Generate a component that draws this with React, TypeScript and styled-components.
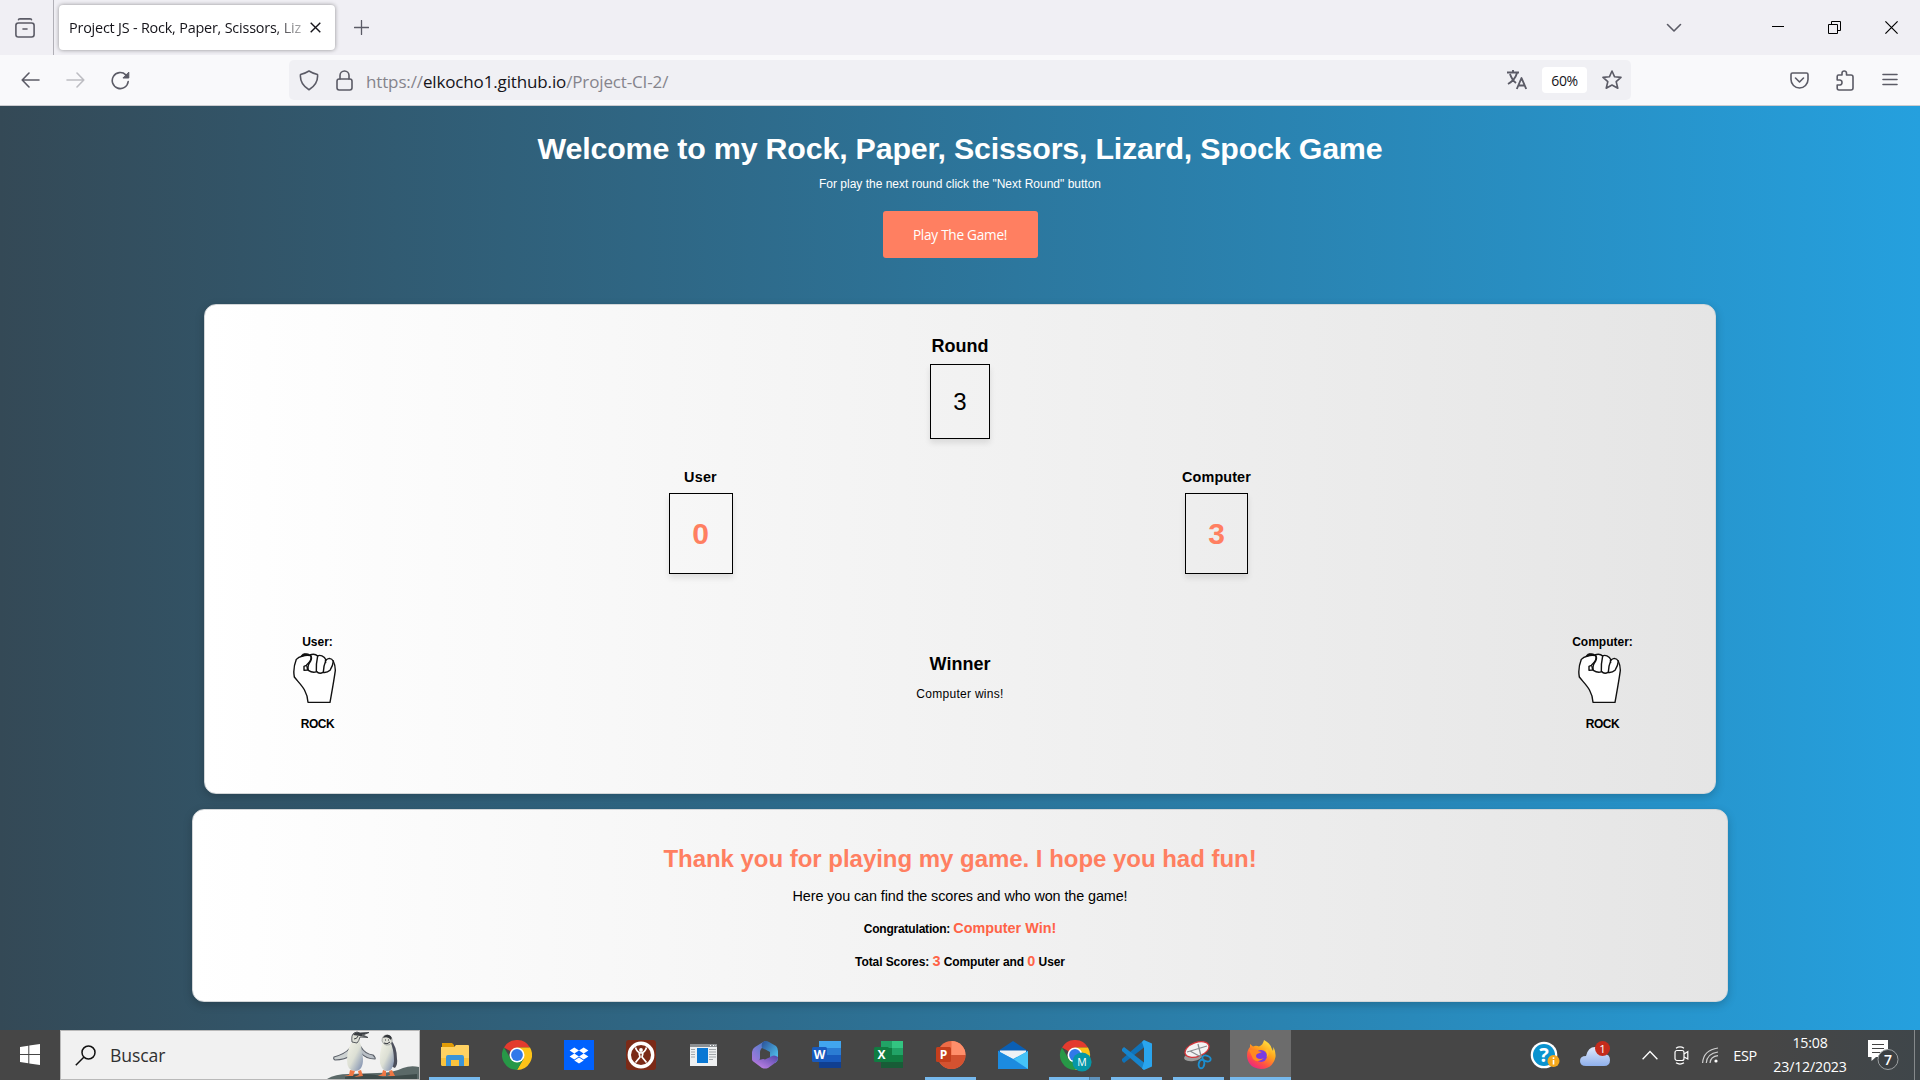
import React from "react";
import styled, { createGlobalStyle } from "styled-components";

const coral = "#ff7f61";
const tomato = "#ff6347";
const uiFont = `"Open Sans", "Noto Sans", sans-serif`;
const pageFont = `"Liberation Sans", Arial, sans-serif`;

const GlobalStyle = createGlobalStyle`
  * { box-sizing: border-box; }
  body { margin: 0; overflow: hidden; }
  h1, h2, h3, h4, p { margin: 0; }
`;

const Screen = styled.div`
  width: 1920px;
  height: 1080px;
  display: flex;
  flex-direction: column;
  font-family: ${uiFont};
`;

/* ---------- browser chrome ---------- */
const TabStrip = styled.div`
  height: 55px;
  display: flex;
  align-items: center;
  background: #f0eff4;
`;
const Slot = styled.div<{ $w: number; $mr?: number }>`
  width: ${(p) => p.$w}px;
  margin-right: ${(p) => p.$mr ?? 0}px;
  flex: none;
  display: flex;
  align-items: center;
  justify-content: center;
  svg { display: block; }
`;
const ViewSlot = styled(Slot)`
  height: 55px;
  border-right: 1px solid #b0afb6;
  padding-right: 3px;
`;
const Tab = styled.div`
  width: 276px;
  height: 45px;
  margin-left: 5px;
  padding: 0 14px 0 10px;
  display: flex;
  align-items: center;
  justify-content: space-between;
  background: #fff;
  border-radius: 4px;
  box-shadow: 0 0 4px rgba(0, 0, 0, 0.4);
`;
const TabTitle = styled.div`
  white-space: nowrap;
  padding-top: 1px;
  font-size: 14.4px;
  line-height: 22px;
  letter-spacing: -0.2px;
  color: #15141a;
  mask-image: linear-gradient(to right, #000 205px, transparent 246px);
`;
const Grow = styled.div`
  flex: 1;
`;
const Toolbar = styled.div`
  height: 51px;
  padding: 0 8px;
  display: flex;
  align-items: center;
  background: #f9f9fb;
  border-bottom: 1px solid #ccccd0;
`;
const UrlBar = styled.div`
  width: 1342px;
  height: 40px;
  margin-left: 146px;
  display: flex;
  align-items: center;
  background: #f0f0f4;
  border-radius: 5px;
`;
const Url = styled.div`
  margin-left: 6px;
  margin-top: 3px;
  flex: 1;
  font-size: 17px;
  line-height: 24px;
  letter-spacing: -0.14px;
  color: #85848c;
  b { font-weight: 400; color: #15141a; }
`;
const ZoomBadge = styled.div`
  width: 45px;
  height: 26px;
  margin-right: 6px;
  border-radius: 4px;
  background: #fff;
  color: #15141a;
  font-size: 14px;
  line-height: 28px;
  letter-spacing: -0.4px;
  text-align: center;
`;

/* ---------- game page ---------- */
const Page = styled.main`
  height: 924px;
  display: flex;
  flex-direction: column;
  align-items: center;
  overflow: hidden;
  font-family: ${pageFont};
  color: #000;
  background: linear-gradient(to right, #344956, #25a0de);
`;
const Title = styled.h1`
  margin-top: 22px;
  font-size: 30.4px;
  line-height: 40px;
  letter-spacing: -0.2px;
  color: #fff;
  white-space: nowrap;
`;
const Hint = styled.p`
  margin-top: 6px;
  font-size: 12px;
  line-height: 20px;
  color: #fff;
`;
const PlayButton = styled.button`
  width: 155px;
  height: 47px;
  margin-top: 17px;
  padding: 0;
  flex: none;
  border: 0;
  border-radius: 3px;
  background: ${coral};
  color: #fff;
  font: 13.6px/47px ${uiFont};
  letter-spacing: -0.25px;
`;
const Card = styled.section<{ $w: number; $h: number; $mt: number; $pt: number }>`
  width: ${(p) => p.$w}px;
  height: ${(p) => p.$h}px;
  margin-top: ${(p) => p.$mt}px;
  padding-top: ${(p) => p.$pt - 1}px;
  flex: none;
  display: flex;
  flex-direction: column;
  align-items: center;
  border: 1px solid #d3d6d8;
  border-radius: 12px;
  background: linear-gradient(to right, #fff, #e5e5e5) border-box;
  box-shadow: 0 3px 10px rgba(0, 0, 0, 0.2);
`;
const Line = styled.p<{ $size: number; $bold?: boolean; $mt?: number; $ls?: number; $color?: string }>`
  margin-top: ${(p) => p.$mt ?? 0}px;
  font-size: ${(p) => p.$size}px;
  font-weight: ${(p) => (p.$bold ? 700 : 400)};
  letter-spacing: ${(p) => p.$ls ?? 0}px;
  color: ${(p) => p.$color ?? "#000"};
  line-height: 20px;
  white-space: nowrap;
`;
const NumberBox = styled.div<{ $w: number; $h: number; $mt: number; $score?: boolean }>`
  width: ${(p) => p.$w}px;
  height: ${(p) => p.$h}px;
  margin-top: ${(p) => p.$mt}px;
  display: flex;
  align-items: center;
  justify-content: center;
  border: 1px solid #000;
  box-shadow: 0 4px 6px rgba(0, 0, 0, 0.1);
  font-size: ${(p) => (p.$score ? 30 : 24)}px;
  font-weight: ${(p) => (p.$score ? 700 : 400)};
  color: ${(p) => (p.$score ? coral : "#000")};
`;
const ScoreRow = styled.div`
  margin-top: 28px;
  margin-right: 3px;
  display: grid;
  grid-template-columns: 516px 516px;
`;
const HandRow = styled.div`
  align-self: stretch;
  margin-top: 58px;
  display: grid;
  grid-template-columns: 225px 1fr 225px;
`;
const Column = styled.div<{ $pt?: number }>`
  padding-top: ${(p) => p.$pt ?? 0}px;
  display: flex;
  flex-direction: column;
  align-items: center;
`;
const FistBox = styled.div`
  height: 52px;
  margin-right: 6px;
  svg { display: block; }
`;
const Mark = styled.span<{ $size: number }>`
  color: ${tomato};
  font-size: ${(p) => p.$size}px;
  letter-spacing: 0;
`;

/* ---------- taskbar ---------- */
const Taskbar = styled.footer`
  height: 50px;
  display: flex;
  background: linear-gradient(to right, #464646 92%, #3f464a);
  color: #fff;
`;
const Start = styled.div`
  width: 60px;
  padding-top: 14px;
  padding-left: 20px;
`;
const Search = styled.div`
  width: 360px;
  height: 50px;
  margin-right: 4px;
  display: flex;
  align-items: center;
  border: 1px solid #b9b9b9;
  background: #f1f1f1;
  color: #303030;
  font-size: 17.6px;
  letter-spacing: -0.1px;
  svg { display: block; }
`;
const SearchLabel = styled.div`
  flex: 1;
`;
const TaskButton = styled.div<{ $state?: "open" | "active" | "group" }>`
  width: 61px;
  height: 50px;
  margin-right: 1px;
  flex: none;
  display: flex;
  flex-direction: column;
  align-items: center;
  justify-content: space-between;
  background: ${(p) => (p.$state === "active" ? "#6c6c6c" : "transparent")};
  svg { display: block; margin-top: 10px; }
  &::after {
    content: "";
    width: ${(p) => (p.$state === "active" ? 61 : 51)}px;
    height: 3px;
    background: ${(p) =>
      p.$state === "group"
        ? "linear-gradient(to right, #76b9ed 40px, #486a84 40px, #5f92bb 41px)"
        : p.$state
        ? "#76b9ed"
        : "transparent"};
  }
`;
const Clock = styled.div`
  width: 90px;
  padding-top: 1px;
  text-align: center;
  font-size: 14.2px;
  line-height: 24px;
  letter-spacing: -0.2px;
`;
const Lang = styled.div`
  width: 40px;
  text-align: center;
  font-size: 14.4px;
  line-height: 51px;
  letter-spacing: -0.4px;
`;
const ShowDesktop = styled.div`
  width: 6px;
  border-left: 1px solid #85898b;
`;

const stroke = {
  fill: "none",
  stroke: "#5b5b66",
  strokeWidth: 1.6,
  strokeLinecap: "round" as const,
  strokeLinejoin: "round" as const,
};

const Fist = () => (
  <svg width="45" height="52" viewBox="305 95 135 156">
    <g fill="#fff" stroke="#111" strokeWidth="4.2" strokeLinejoin="round" strokeLinecap="round">
      <path d="M353 246L419 246C425 212 431 180 435 150C434 130 430 115 417 114Q411 115 407 119C402 106 388 103 382 107C376 101 366 101 358 104C350 99 343 100 337 107Q324 110 318 117C311 135 309 155 312 170C327 190 351 207 353 246Z" />
      <path d="M337 107Q349 103 361 106Q367 118 348 135L341 138L341 150L352 149L350 138" fill="none" />
      <path d="M361 106Q366 112 361 122Q350 136 354 150Q367 159 379 154" fill="none" />
      <path d="M382 107Q377 130 378 153Q387 163 398 156Q410 158 419 150Q428 136 429 122" fill="none" />
      <path d="M407 119Q400 135 399 155M405 121L406 127" fill="none" />
      <path d="M334 107Q341 98 349 104" fill="none" strokeWidth="5" />
    </g>
  </svg>
);

const Penguins = () => (
  <svg width="92" height="48" viewBox="0 0 92 48">
    <defs>
      <linearGradient id="belly" x1="0" y1="0" x2="1" y2="1">
        <stop offset="0" stopColor="#f4f4e8" />
        <stop offset=".5" stopColor="#dcdfd4" />
        <stop offset="1" stopColor="#7486ac" />
      </linearGradient>
    </defs>
    <path d="M0 48Q8 43 22 43L50 42Q66 42 76 37Q84 34 92 36V48Z" fill="#5b6968" />
    <path d="M18 46Q40 40 56 46L90 43V48H18Z" fill="#3e4b4a" />
    <path d="M23 17Q18 23 7 26Q6 28 8 29Q18 29 24 24Z" fill="#cdd2d2" stroke="#5b6069" strokeWidth="1.1" />
    <path d="M34 16Q38 23 46 24Q49 27 48 28Q39 28 34 22Z" fill="#b9bfc6" stroke="#5b6069" strokeWidth="1.1" />
    <path d="M26 9Q20 18 20 29Q20 40 28 40Q36 40 36 28Q35 16 32 9Z" fill="url(#belly)" />
    <path d="M25 11Q24 4 27 2Q30 0 33 2L42 1.500L36 4L41 6.500L33 6Q32 10 30 12Z" fill="#dddfd6" stroke="#4a4d52" strokeWidth=".9" />
    <path d="M26 4Q28 0 33 2L42 1.500L35 4L41 6.500L33 5Z" fill="#3a3d42" />
    <path d="M27 8Q30 8 31 5" fill="none" stroke="#3a3d42" />
    <path d="M23 39L22 44L17 45H26L28 40M31 40L32 44L27 46L36 45L34 39" fill="#ef7744" />
    <path d="M63 8Q70 15 70 28Q71 33 68 37Q63 36 63 28Z" fill="#4c4f5c" />
    <path d="M56 11Q52 22 53 32Q55 40 60 40Q66 40 67 30Q67 18 63 10Z" fill="url(#belly)" />
    <path d="M55 10Q55 4 60 4Q66 5 65 11Q63 15 59 14Q56 13 55 10Z" fill="#dedfd7" stroke="#7b7e7e" strokeWidth=".6" />
    <path d="M56 7Q58 3 62 4Q66 6 64 9Q61 5 56 7Z" fill="#33363b" />
    <path d="M58 9H59M61 9H62M57 12Q60 14 63 11" stroke="#33363b" fill="none" />
    <path d="M56 39L55 43L51 45H59L59 40M62 40L63 44L60 45H68L65 39" fill="#ef7744" />
  </svg>
);

const Svg = ({ children, vb = "0 0 30 30" }: { children: React.ReactNode; vb?: string }) => (
  <svg width="30" height="30" viewBox={vb}>{children}</svg>
);

const Explorer = () => (
  <Svg>
    <path d="M2 3H12L14 5V9H2Z" fill="#e09b06" />
    <path d="M1 7H14L16 5H28Q29 5 29 6V24Q29 26 28 26H3Q1 26 1 24Z" fill="#ffd262" />
    <path d="M1 18H29V24Q29 26 28 26H3Q1 26 1 24Z" fill="#fbc33c" />
    <path d="M6 26V17Q6 15 8 15H22Q24 15 24 17V26H19V20H11V26Z" fill="#3b94d8" />
  </Svg>
);
const ChromeArt = () => (
  <>
    <path d="M15 15L2 7.5A15 15 0 0 1 28 7.5H15Z" fill="#e33b2e" />
    <path d="M28 7.5A15 15 0 0 1 15 30L21.5 18.7L15 7.5Z" fill="#fdc318" />
    <path d="M2 7.5A15 15 0 0 0 15 30L21.5 18.7H8.5Z" fill="#279847" />
    <circle cx="15" cy="15" r="7.5" fill="#fff" />
    <circle cx="15" cy="15" r="5.9" fill="#3079e9" />
  </>
);
const Dropbox = () => (
  <Svg>
    <path d="M0 0H30V30H0Z" fill="#0061fe" />
    <path
      d="M10.3 7.5L15 10.5L10.3 13.5L5.6 10.5ZM19.7 7.5L24.4 10.5L19.7 13.5L15 10.5ZM10.3 13.5L15 16.5L10.3 19.5L5.6 16.5ZM19.7 13.5L24.4 16.5L19.7 19.5L15 16.5ZM15 17.6L19.7 20.5L15 23.4L10.3 20.5Z"
      fill="#fff"
    />
  </Svg>
);
const Gym = () => (
  <Svg>
    <rect width="30" height="30" rx="3" fill="#7b2a17" />
    <circle cx="15" cy="15" r="11.7" fill="none" stroke="#fff" strokeWidth="3.4" />
    <circle cx="15" cy="10" r="1.9" fill="#fff" />
    <path d="M9.500 7.500Q11 12.500 15 13Q19 12.500 20.500 7.500M13 13L14 17L9.500 22.500M17 13L16 17L20.500 22.500" stroke="#fff" strokeWidth="1.700" fill="none" />
  </Svg>
);
const WindowApp = () => (
  <Svg>
    <path d="M2 4H29V26H2Z" fill="#eef0f1" />
    <path d="M2 4H29V7H2Z" fill="#8b8f92" />
    <path d="M22 5.5H23M25 5.5H26M27.500 5.500H28" stroke="#fff" />
    <path d="M9 8H20V23H9Z" fill="#0a78d4" />
    <path d="M3 9.500H7M3 12H7M3 14.500H7M3 17H7M21 9.500H28M21 12H28M21 14.500H28M21 17H28M21 19.500H25" stroke="#a3a8ab" />
  </Svg>
);
const M365 = () => (
  <Svg>
    <defs>
      <linearGradient id="m1" x1="1" y1="0" x2="0" y2="1"><stop offset="0" stopColor="#3f7fc4" /><stop offset="1" stopColor="#a878e0" /></linearGradient>
      <linearGradient id="m2" x1="0" y1="0" x2="1" y2="1"><stop offset="0" stopColor="#2b4f96" /><stop offset="1" stopColor="#56d3fb" /></linearGradient>
      <linearGradient id="m3" x1="0" y1="1" x2="1" y2="0"><stop offset="0" stopColor="#d18cf0" /><stop offset="1" stopColor="#5046a8" /></linearGradient>
    </defs>
    <path d="M15 1L5 7Q2 9 2 12V19Q2 22 6 22Q10 21 10 18V12Q10 8 18 3Z" fill="url(#m1)" />
    <path d="M13 2Q16 0 19 2L26 6Q28 8 28 11V18Q28 21 25 23L20 19V12L12 8Q11 4 13 2Z" fill="url(#m2)" />
    <path d="M28 17Q28 21 25 23L18 28Q15 29 12 28L4 22Q2 20 2 18Q5 22 9 20L20 17Q24 14 28 17Z" fill="url(#m3)" />
    <path d="M15 9.500L20 12.500V17L15 19.500L10.500 18V12.500Z" fill="#464646" />
  </Svg>
);
const Letter = ({ children }: { children: string }) => (
  <text x="7.500" y="19" textAnchor="middle" fill="#fff" fontSize="12" fontWeight="700" fontFamily={uiFont}>
    {children}
  </text>
);
const Word = () => (
  <Svg>
    <path d="M7 1H29V8H7Z" fill="#41a5ee" /><path d="M7 8H29V15H7Z" fill="#2b7cd3" />
    <path d="M7 15H29V22H7Z" fill="#185abd" /><path d="M7 22H29V28H7Z" fill="#103f91" />
    <rect x="0" y="7" width="15" height="15" rx="1.500" fill="#185abd" /><Letter>W</Letter>
  </Svg>
);
const Excel = () => (
  <Svg>
    <path d="M7 1H18V8H7Z" fill="#21a366" /><path d="M18 1H29V8H18Z" fill="#33c481" />
    <path d="M7 8H18V22H7Z" fill="#107c41" /><path d="M18 8H29V15H18Z" fill="#21a366" />
    <path d="M18 15H29V22H18Z" fill="#107c41" /><path d="M7 22H29V28H7Z" fill="#185c37" />
    <rect x="0" y="7" width="15" height="15" rx="1.500" fill="#107c41" /><Letter>X</Letter>
  </Svg>
);
const PowerPoint = () => (
  <Svg>
    <circle cx="15.500" cy="15" r="14" fill="#ed6c47" />
    <path d="M15.500 1A14 14 0 0 1 29.500 15H15.500Z" fill="#ff8f6b" />
    <path d="M1.500 15H29.500A14 14 0 0 1 1.500 15Z" fill="#d35230" />
    <rect x="0" y="7" width="15" height="15" rx="1.500" fill="#c43e1c" /><Letter>P</Letter>
  </Svg>
);
const Mail = () => (
  <Svg>
    <path d="M0 11L15 1L30 11V14H0Z" fill="#0a5fb4" />
    <path d="M2 10.500H28V24H2Z" fill="#eef2f5" />
    <path d="M0 11L15 19L30 11V29H0Z" fill="#2ea9ee" />
    <path d="M0 29L30 11V29Z" fill="#45c3f8" />
    <path d="M0 11L15 19L30 29H0Z" fill="#1c8be0" />
  </Svg>
);
const ChromeProfile = () => (
  <svg width="34" height="32" viewBox="-2 0 34 32">
    <ChromeArt />
    <circle cx="22" cy="22" r="9.600" fill="#0697a7" />
    <text x="22" y="25.800" textAnchor="middle" fill="#fff" fontSize="10.500" fontFamily={uiFont}>M</text>
  </svg>
);
const VsCode = () => (
  <Svg>
    <path d="M22 0L0 19V21L2 23L22 7.500Z" fill="#0f72b8" />
    <path d="M22 30L0 11V9L2 7L22 22.500Z" fill="#1684cc" />
    <path d="M22 0L30 3.500V26.500L22 30L20 28.500L22 22V8L20 2Z" fill="#2aa5ee" />
  </Svg>
);
const Snip = () => (
  <Svg>
    <ellipse cx="9" cy="17" rx="9" ry="4" transform="rotate(-8 9 17)" fill="#9d9d9d" />
    <ellipse cx="13" cy="9.500" rx="12.500" ry="7" transform="rotate(-20 13 9.500)" fill="#f3f3f3" stroke="#d5353a" strokeWidth="1.300" />
    <path d="M6 11L17 17M14 4L17 16M3 12L23 6" stroke="#8a8d90" strokeWidth="1.300" />
    <g fill="none" stroke="#1c8fd1" strokeWidth="1.900">
      <ellipse cx="22.500" cy="18.500" rx="4.300" ry="2.800" transform="rotate(20 22.500 18.500)" />
      <ellipse cx="17.500" cy="24" rx="2.800" ry="4.300" transform="rotate(10 17.500 24)" />
    </g>
  </Svg>
);
const Firefox = () => (
  <Svg>
    <defs>
      <linearGradient id="fx" x1=".85" y1="0" x2=".2" y2="1">
        <stop offset="0" stopColor="#fff04a" /><stop offset=".4" stopColor="#ffa31a" /><stop offset=".72" stopColor="#ff4f45" /><stop offset="1" stopColor="#e8208a" />
      </linearGradient>
    </defs>
    <path d="M18 0Q24 3 25.500 8L27 11L27.500 7Q30 12 29.500 17Q27 28.500 15 29Q2 28 1 16Q1 10 4 7V4L7 6.500Q10 5 13 6.500Q17 5 18 0Z" fill="url(#fx)" />
    <circle cx="15" cy="16" r="6" fill="#7a3be0" />
    <path d="M3 10Q8 8 12 11L16 12L11 14Q9 16 11 18Q14 20 18 18Q12 24 7 19Q5 14 3 10Z" fill="#ff8a1f" />
    <path d="M19 10Q22 13 20.500 17Q24 14 22 9Z" fill="#ffbd2e" />
  </Svg>
);

export default function App() {
  return (
    <>
      <GlobalStyle />
      <Screen>
        <TabStrip>
          <ViewSlot $w={54}>
            <svg width="20" height="20" viewBox="0 0 20 20" {...stroke}>
              <path d="M3.500 1.800Q3.500 .9 5 .9H15Q16.500 .9 16.500 1.800" />
              <rect x=".9" y="5" width="18.200" height="14" rx="2.500" />
              <path d="M8 11H12" />
            </svg>
          </ViewSlot>
          <Tab>
            <TabTitle>Project JS - Rock, Paper, Scissors, Liz</TabTitle>
            <svg width="11" height="11" viewBox="0 0 11 11" stroke="#15141a" strokeWidth="1.400">
              <path d="M.7 .7L10.300 10.300M10.300 .7L.7 10.300" />
            </svg>
          </Tab>
          <Slot $w={53}>
            <svg width="15" height="15" viewBox="0 0 15 15" {...stroke} strokeWidth={1.3}><path d="M7.500 .5V14.500M.5 7.500H14.500" /></svg>
          </Slot>
          <Grow />
          <Slot $w={50} $mr={50}>
            <svg width="16" height="10" viewBox="0 0 16 10" {...stroke}><path d="M1.500 1.500L8 8L14.500 1.500" /></svg>
          </Slot>
          <Slot $w={57}>
            <svg width="13" height="13" viewBox="0 0 13 13"><path d="M1 5H13V6H1Z" /></svg>
          </Slot>
          <Slot $w={57}>
            <svg width="13" height="13" viewBox="0 0 13 13" fill="none" stroke="#000"><path d="M.5 3.500H9.500V12.500H.5ZM3.500 3.500V.5H12.500V9.500H9.500" /></svg>
          </Slot>
          <Slot $w={57}>
            <svg width="13" height="13" viewBox="0 0 13 13" stroke="#000" strokeWidth="1.200"><path d="M.4 .4L12.600 12.600M12.600 .4L.4 12.600" /></svg>
          </Slot>
        </TabStrip>
        <Toolbar>
          <Slot $w={45}>
            <svg width="19" height="16" viewBox="0 0 19 16" {...stroke}><path d="M18 8H1.200M8 1L1.200 8L8 15" /></svg>
          </Slot>
          <Slot $w={45}>
            <svg width="19" height="16" viewBox="0 0 19 16" {...stroke} stroke="#bdbdc2"><path d="M1 8H17.800M11 1L17.800 8L11 15" /></svg>
          </Slot>
          <Slot $w={45}>
            <svg width="19" height="19" viewBox="0 0 19 19" {...stroke}>
              <path d="M17.200 10.500A8 8 0 1 1 14.800 3.800L17 6" />
              <path d="M17.800 1.500V7H12.300Z" fill="#5b5b66" strokeWidth="1" />
            </svg>
          </Slot>
          <UrlBar>
            <Slot $w={39}>
              <svg width="20" height="21" viewBox="0 0 20 21" {...stroke}>
                <path d="M10 1Q14 3.500 18.500 4.500Q19.500 14 10 19.800Q.5 14 1.500 4.500Q6 3.500 10 1Z" />
              </svg>
            </Slot>
            <Slot $w={32}>
              <svg width="17" height="21" viewBox="0 0 17 21" {...stroke}>
                <rect x="1" y="9" width="15" height="11" rx="2.200" />
                <path d="M4 9V5.500A4.500 4.500 0 0 1 13 5.500V9" />
              </svg>
            </Slot>
            <Url>https://<b>elkocho1.github.io</b>/Project-CI-2/</Url>
            <Slot $w={50}>
              <svg width="20" height="20" viewBox="0 0 20 20" {...stroke} strokeLinecap="butt" strokeWidth={1.9}>
                <path d="M0 2.500H12M6 0V2.500M10 3Q8 10 1 14M3 4Q5 10 9 13M9.800 19L14.500 8L19.200 19M11.500 15.500H17.500" />
              </svg>
            </Slot>
            <ZoomBadge>60%</ZoomBadge>
            <Slot $w={38}>
              <svg width="20" height="20" viewBox="0 0 20 20" {...stroke}>
                <path d="M10 1L12.600 6.800L19 7.400L14.200 11.700L15.800 18.200L10 15L4.200 18.200L5.800 11.700L1 7.400L7.400 6.800Z" />
              </svg>
            </Slot>
          </UrlBar>
          <Grow />
          <Slot $w={45}>
            <svg width="19" height="17" viewBox="0 0 19 17" {...stroke}>
              <path d="M2.500 1H16.500Q18 1 18 2.500V7.500A8.500 8.500 0 0 1 1 7.500V2.500Q1 1 2.500 1Z" />
              <path d="M5.500 6L9.500 10L13.500 6" />
            </svg>
          </Slot>
          <Slot $w={45}>
            <svg width="18" height="21" viewBox="0 0 18 21" {...stroke}>
              <path d="M2.500 5H6V3Q6.200 1 8.200 1Q10.300 1 10.500 3V5H15Q17 5 17 7V18Q17 20 15 20H3Q1.200 20 1.200 18V15H4Q6 14.600 6 12.500Q6 10.400 4 10H1.200V6.500Q1.200 5 2.500 5Z" />
            </svg>
          </Slot>
          <Slot $w={45}>
            <svg width="16" height="14" viewBox="0 0 16 14" {...stroke}><path d="M1 1.500H15M1 6.500H15M1 11.500H15" /></svg>
          </Slot>
        </Toolbar>

        <Page>
          <Title>Welcome to my Rock, Paper, Scissors, Lizard, Spock Game</Title>
          <Hint>For play the next round click the "Next Round" button</Hint>
          <PlayButton>Play The Game!</PlayButton>

          <Card $w={1512} $h={490} $mt={46} $pt={32}>
            <Line as="h2" $size={18} $bold>Round</Line>
            <NumberBox $w={60} $h={75} $mt={8}>3</NumberBox>
            <ScoreRow>
              <Column>
                <Line as="h3" $size={14.4} $bold $ls={0.2}>User</Line>
                <NumberBox $w={64} $h={81} $mt={6} $score>0</NumberBox>
              </Column>
              <Column>
                <Line as="h3" $size={14.4} $bold $ls={0.1}>Computer</Line>
                <NumberBox $w={63} $h={81} $mt={6} $score>3</NumberBox>
              </Column>
            </ScoreRow>
            <HandRow>
              <Column>
                <Line as="h4" $size={12} $bold>User:</Line>
                <FistBox><Fist /></FistBox>
                <Line $size={12} $bold $mt={10} $ls={-0.4}>ROCK</Line>
              </Column>
              <Column $pt={22}>
                <Line as="h2" $size={18} $bold>Winner</Line>
                <Line $size={12} $mt={10} $ls={0.28}>Computer wins!</Line>
              </Column>
              <Column>
                <Line as="h4" $size={12} $bold>Computer:</Line>
                <FistBox><Fist /></FistBox>
                <Line $size={12} $bold $mt={10} $ls={-0.4}>ROCK</Line>
              </Column>
            </HandRow>
          </Card>

          <Card $w={1536} $h={193} $mt={15} $pt={40}>
            <Line as="h2" $size={24} $bold $ls={-0.03} $color={coral}>Thank you for playing my game. I hope you had fun!</Line>
            <Line $size={14.4} $mt={17} $ls={-0.1}>Here you can find the scores and who won the game!</Line>
            <Line $size={12} $bold $mt={12} $ls={-0.2}>
              Congratulation: <Mark $size={14.4}>Computer Win!</Mark>
            </Line>
            <Line $size={12} $bold $mt={12} $ls={-0.08}>
              Total Scores: <Mark $size={14.4}>3</Mark> Computer and <Mark $size={14.4}>0</Mark> User
            </Line>
          </Card>
        </Page>

        <Taskbar>
          <Start>
            <svg width="20" height="21" viewBox="0 0 20 21" fill="#fff">
              <path d="M0 3L8.300 1.800V10H0ZM9.300 1.600L20 0V10H9.300ZM0 11H8.300V19.200L0 18ZM9.300 11H20V21L9.300 19.400Z" />
            </svg>
          </Start>
          <Search>
            <Slot $w={49}>
              <svg width="21" height="21" viewBox="0 0 21 21" fill="none" stroke="#111" strokeWidth="1.500">
                <circle cx="13.500" cy="7.500" r="6.500" /><path d="M8.800 12.200L.8 20.200" />
              </svg>
            </Slot>
            <SearchLabel>Buscar</SearchLabel>
            <Penguins />
          </Search>
          <TaskButton $state="open"><Explorer /></TaskButton>
          <TaskButton><Svg><ChromeArt /></Svg></TaskButton>
          <TaskButton><Dropbox /></TaskButton>
          <TaskButton><Gym /></TaskButton>
          <TaskButton><WindowApp /></TaskButton>
          <TaskButton><M365 /></TaskButton>
          <TaskButton><Word /></TaskButton>
          <TaskButton><Excel /></TaskButton>
          <TaskButton $state="open"><PowerPoint /></TaskButton>
          <TaskButton><Mail /></TaskButton>
          <TaskButton $state="group"><ChromeProfile /></TaskButton>
          <TaskButton $state="open"><VsCode /></TaskButton>
          <TaskButton $state="open"><Snip /></TaskButton>
          <TaskButton $state="active"><Firefox /></TaskButton>
          <Grow />
          <Slot $w={50}>
            <svg width="30" height="28" viewBox="0 0 30 28">
              <circle cx="14" cy="14" r="13.300" fill="#fff" /><circle cx="14" cy="14" r="11" fill="#0a93cf" />
              <text x="14" y="21" textAnchor="middle" fill="#fff" fontSize="20" fontWeight="700" fontFamily={uiFont}>?</text>
              <circle cx="23.500" cy="20" r="6" fill="#f5a81c" />
              <path d="M22.700 16.300H24.300V18H22.700ZM22.700 19H24.300V23.500H22.700Z" fill="#fff" />
            </svg>
          </Slot>
          <Slot $w={50} $mr={9}>
            <svg width="30" height="28" viewBox="0 0 30 28">
              <defs><linearGradient id="cl" x1="0" y1="0" x2="0" y2="1"><stop offset="0" stopColor="#dfe9fb" /><stop offset="1" stopColor="#8fb0ec" /></linearGradient></defs>
              <path d="M6 25Q0 25 0 20Q0 15 6 15Q8 6 15 6Q22 6 24 13Q30 13 30 19Q30 25 24 25Z" fill="url(#cl)" />
              <circle cx="22.500" cy="7.500" r="7.500" fill="#c42b1c" />
              <text x="22.500" y="11.700" textAnchor="middle" fill="#fff" fontSize="11.500" fontFamily={uiFont}>1</text>
            </svg>
          </Slot>
          <Slot $w={42}>
            <svg width="16" height="10" viewBox="0 0 16 10" fill="none" stroke="#fff" strokeWidth="1.300"><path d="M.6 9.300L8 1.500L15.400 9.300" /></svg>
          </Slot>
          <Slot $w={20} $mr={4}>
            <svg width="15" height="19" viewBox="0 0 15 19" fill="none" stroke="#fff" strokeWidth="1.200">
              <rect x="1" y="4.500" width="9" height="10" rx="2" /><path d="M10 8L13.800 5.500V13L10 11M2 2.200Q6 -.3 10 2.200M2 16.800Q6 19.300 10 16.800" />
            </svg>
          </Slot>
          <Slot $w={30}>
            <svg width="17" height="17" viewBox="0 0 17 17" fill="none" stroke="#fff" strokeWidth="1.200">
              <g opacity=".75"><path d="M.6 16Q1.500 3 16 1M4.300 16Q5 6.500 16 5M8 16Q8.500 9.500 16 8.700" /></g>
              <circle cx="14" cy="14" r="1.600" fill="#fff" stroke="none" />
            </svg>
          </Slot>
          <Lang>ESP</Lang>
          <Clock>15:08<br />23/12/2023</Clock>
          <Slot $w={57} $mr={2}>
            <svg width="31" height="31" viewBox="0 0 31 31">
              <path d="M0 0H20V17H8L3.500 21V17H0Z" fill="#fff" />
              <path d="M4 4.500H16M4 8.500H16M4 12.500H12" stroke="#444" strokeWidth="1.100" />
              <circle cx="20" cy="19.500" r="10" fill="#3c4043" stroke="#9b9fa1" />
              <text x="20" y="24.500" textAnchor="middle" fill="#fff" fontSize="14" fontWeight="600" fontFamily={uiFont}>7</text>
            </svg>
          </Slot>
          <ShowDesktop />
        </Taskbar>
      </Screen>
    </>
  );
}
